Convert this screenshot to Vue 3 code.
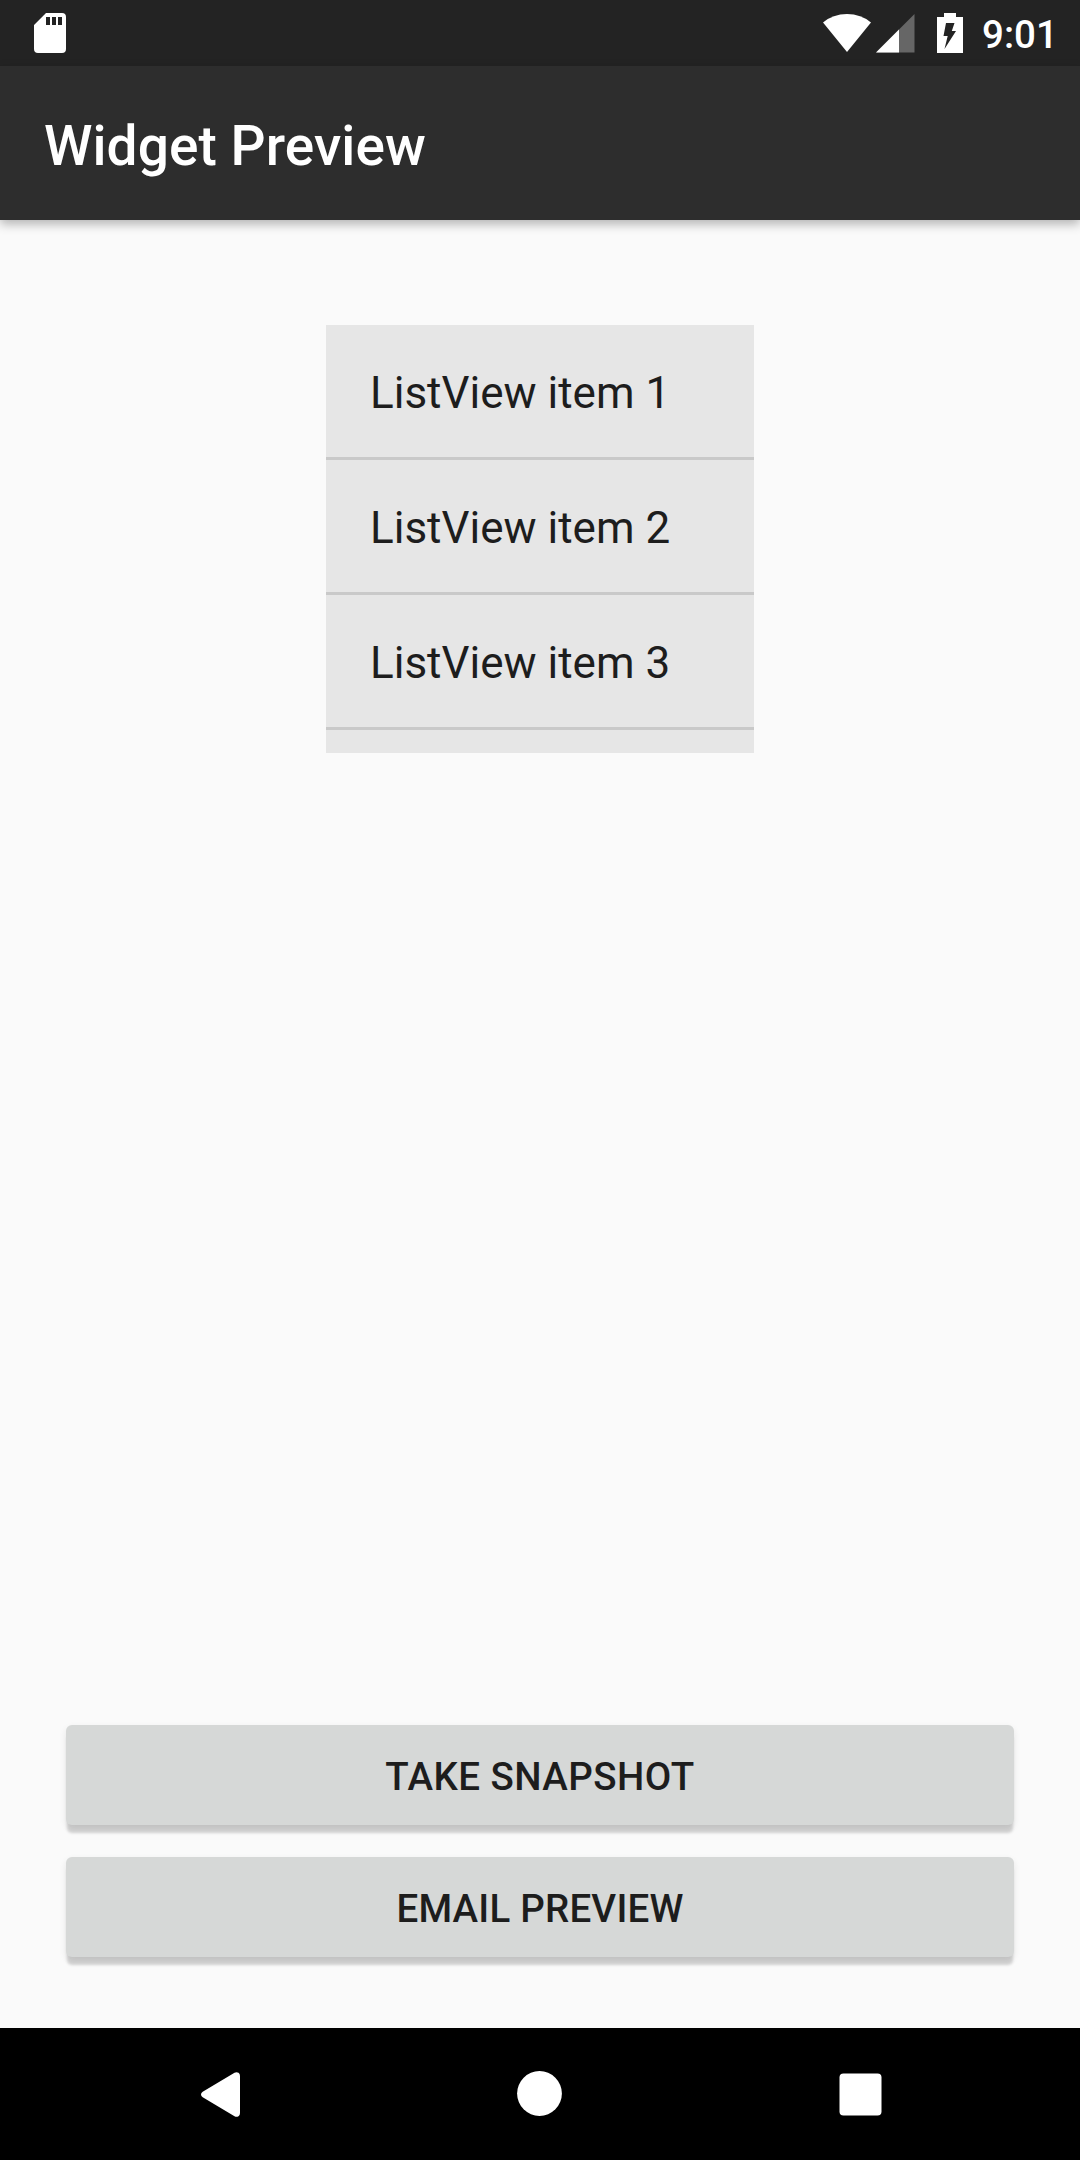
<script setup>
const items = ['ListView item 1', 'ListView item 2', 'ListView item 3']
const actions = ['TAKE SNAPSHOT', 'EMAIL PREVIEW']
</script>

<template>
  <div class="screen">
    <header class="status-bar">
      <svg class="sd" width="32" height="40" viewBox="0 0 32 40">
        <path fill="#fff" fill-rule="evenodd" d="M12 0H28Q32 0 32 4V36Q32 40 28 40H4Q0 40 0 36V12ZM12 4V12H16V4ZM18 4V12H22V4ZM24 4V12H28V4Z" />
      </svg>
      <div class="indicators">
        <svg class="wifi" width="48" height="38" viewBox="0 0 48 38">
          <path fill="#fff" d="M24 38L0 8.5Q10 0 24 0T48 8.5Z" />
        </svg>
        <svg class="signal" width="39" height="39" viewBox="0 0 39 39">
          <path fill="#666" d="M38.5 0V38.5H0Z" />
          <path fill="#fff" d="M23 15.5V38.5H0Z" />
        </svg>
        <svg class="battery" width="26" height="40" viewBox="0 0 26 40">
          <path fill="#fff" d="M7 0H19V4H26V40H0V4H7Z" />
          <path fill="#232323" d="M9 10H17.5L14.8 18H19L7.5 36L10.7 23H6.5Z" />
        </svg>
        <span class="clock">9:01</span>
      </div>
    </header>
    <div class="app-bar"><h1>Widget Preview</h1></div>
    <main>
      <ul class="list">
        <li v-for="item in items" :key="item">{{ item }}</li>
      </ul>
      <div class="actions">
        <button v-for="action in actions" :key="action" type="button">{{ action }}</button>
      </div>
    </main>
    <nav>
      <svg class="back" width="39" height="45" viewBox="0 0 39 45">
        <path fill="#fff" d="M33.5 0.8Q35.5 -0.4 37.5 0.8Q39 1.8 39 4V41Q39 43.2 37.5 44.2Q35.5 45.4 33.5 44.2L1.7 25.3Q0 24.3 0 22.5T1.7 19.7Z" />
      </svg>
      <svg class="home" width="45" height="45" viewBox="0 0 45 45">
        <circle cx="22.5" cy="22.5" r="22.4" fill="#fff" />
      </svg>
      <svg class="recent" width="43" height="43" viewBox="0 0 43 43">
        <rect x="0.5" y="0.5" width="42" height="42" rx="4" fill="#fff" />
      </svg>
    </nav>
  </div>
</template>

<style>
body {
  margin: 0;
}
</style>

<style scoped>
.screen {
  width: 1080px;
  height: 2160px;
  display: flex;
  flex-direction: column;
  overflow: hidden;
  background: #fafafa;
  color: #1d1d1d;
  font-family: Roboto, sans-serif;
}
svg {
  display: block;
  flex: none;
}
.status-bar {
  box-sizing: border-box;
  height: 66px;
  flex: none;
  display: flex;
  justify-content: space-between;
  padding: 13px 27px 0 34px;
  background: #232323;
  color: #fff;
}
.indicators {
  display: flex;
}
.wifi {
  margin: 1px 5px 0 0;
}
.signal {
  margin: 1px 22px 0 0;
}
.clock {
  width: 71px;
  margin: -1px 0 0 19px;
  font-size: 38.5px;
  font-weight: 500;
  line-height: 45px;
  white-space: nowrap;
}
.app-bar {
  height: 154px;
  flex: none;
  display: flex;
  align-items: center;
  padding-left: 44px;
  background: #2d2d2d;
  color: #fff;
  box-shadow: 0 4px 10px rgba(0, 0, 0, 0.29);
}
h1 {
  margin: 6px 0 0;
  font-size: 55px;
  font-weight: 500;
  line-height: 64px;
  letter-spacing: 0.08px;
}
main {
  flex: 1;
  display: flex;
  flex-direction: column;
  justify-content: space-between;
  padding: 105px 66px 71px;
}
.list {
  width: 428px;
  height: 428px;
  margin: 0 auto;
  padding: 0;
  list-style: none;
  background: #e6e6e6;
}
.list li {
  height: 132px;
  padding-left: 44px;
  border-bottom: 3px solid #c9c9c9;
  font-size: 44px;
  line-height: 136px;
}
.actions {
  display: flex;
  flex-direction: column;
  gap: 32px;
}
button {
  height: 100px;
  padding: 2px 0 0;
  border: 0;
  border-radius: 6px;
  background: #d6d8d7;
  color: #1d1d1d;
  font: 500 38.5px/45px Roboto, sans-serif;
  letter-spacing: 0.2px;
  box-shadow: 0 9px 3px -1px rgba(0, 0, 0, 0.16), 0 3px 7px rgba(0, 0, 0, 0.09);
}
button:first-child {
  letter-spacing: 0.44px;
}
nav {
  height: 132px;
  flex: none;
  display: flex;
  align-items: flex-start;
  background: #000;
}
.back {
  margin: 44px 0 0 201px;
}
.home {
  margin: 43px 0 0 277px;
}
.recent {
  margin: 45px 0 0 277px;
}
</style>
